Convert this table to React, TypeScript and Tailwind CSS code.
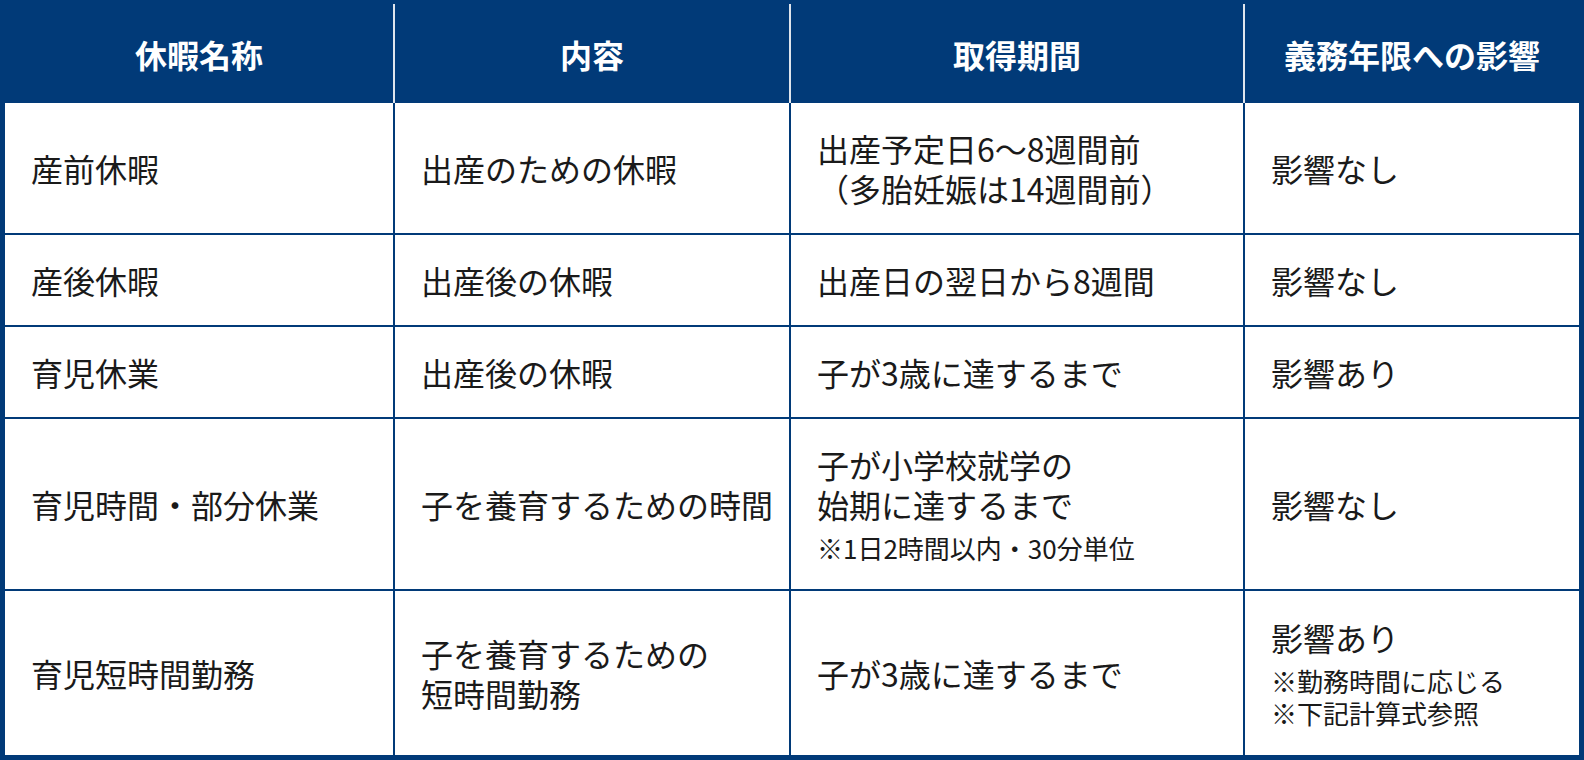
import React from 'react';

interface Row {
    name: string;
    content: string[];
    period: string[];
    periodNote?: string;
    impact: string;
    impactNotes?: string[];
}

const ROWS: Row[] = [
    { name: '産前休暇', content: ['出産のための休暇'], period: ['出産予定日6〜8週間前', '（多胎妊娠は14週間前）'], impact: '影響なし' },
    { name: '産後休暇', content: ['出産後の休暇'], period: ['出産日の翌日から8週間'], impact: '影響なし' },
    { name: '育児休業', content: ['出産後の休暇'], period: ['子が3歳に達するまで'], impact: '影響あり' },
    {
        name: '育児時間・部分休業',
        content: ['子を養育するための時間'],
        period: ['子が小学校就学の', '始期に達するまで'],
        periodNote: '※1日2時間以内・30分単位',
        impact: '影響なし',
    },
    {
        name: '育児短時間勤務',
        content: ['子を養育するための', '短時間勤務'],
        period: ['子が3歳に達するまで'],
        impact: '影響あり',
        impactNotes: ['※勤務時間に応じる', '※下記計算式参照'],
    },
];

const HEADERS = ['休暇名称', '内容', '取得期間', '義務年限への影響'];

function Cell({ lines, notes }: { lines: string[]; notes?: string[] }) {
    return (
        <div className="bg-white flex items-center pl-[26px]">
            <div>
                {lines.map((l) => (
                    <div key={l} className="text-[32px] leading-[40px] whitespace-nowrap">{l}</div>
                ))}
                {notes && (
                    <div className="mt-2">
                        {notes.map((n) => (
                            <div key={n} className="text-[26px] leading-[32px] whitespace-nowrap">{n}</div>
                        ))}
                    </div>
                )}
            </div>
        </div>
    );
}

export default function App() {
    return (
        <div
            className="w-[1584px] h-[760px] bg-[#013a78] pt-[4px] px-[5px] pb-[5px] text-[#1a1a1a]"
            style={{ fontFamily: '"Noto Sans CJK JP", "Noto Sans", sans-serif' }}
        >
            <div className="grid grid-cols-[388px_394px_452px_334px] gap-x-[2px] bg-[#dfe4ec] h-[99px]">
                {HEADERS.map((h) => (
                    <div key={h} className="bg-[#013a78] flex items-center justify-center text-white font-bold text-[32px]">
                        {h}
                    </div>
                ))}
            </div>
            <div className="grid grid-cols-[388px_394px_452px_334px] grid-rows-[130px_90px_90px_170px_164px] gap-[2px]">
                {ROWS.map((r) => (
                    <React.Fragment key={r.name}>
                        <Cell lines={[r.name]} />
                        <Cell lines={r.content} />
                        <Cell lines={r.period} notes={r.periodNote ? [r.periodNote] : undefined} />
                        <Cell lines={[r.impact]} notes={r.impactNotes} />
                    </React.Fragment>
                ))}
            </div>
        </div>
    );
}
